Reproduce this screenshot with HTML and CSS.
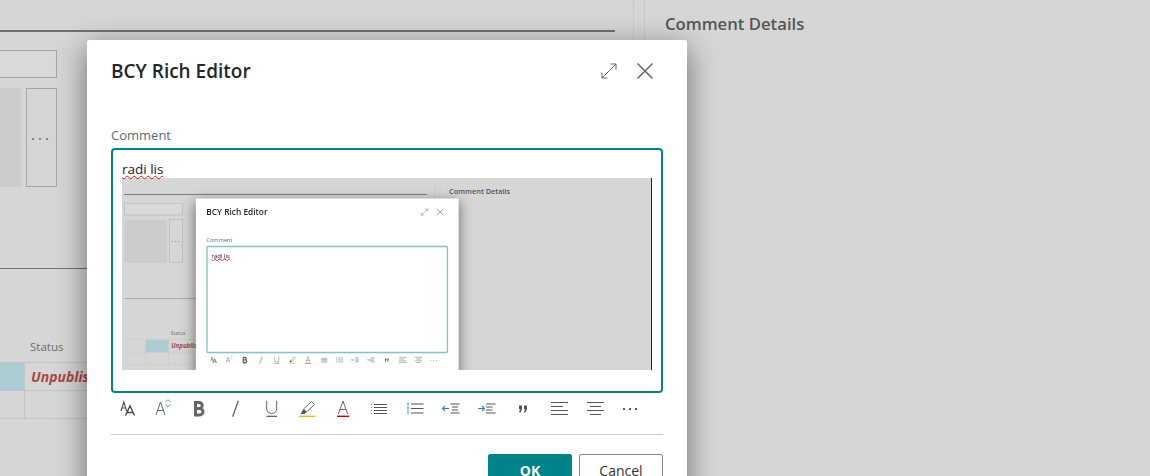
FILE: index.html
```html
<!DOCTYPE html>
<html>
<head>
  <meta charset="UTF-8">
  <title>BCY Rich Editor</title>
  <link rel="stylesheet" href="styles.css">
</head>
<body>

<svg class="icon-defs" xmlns="http://www.w3.org/2000/svg">
  <symbol id="i-expand" viewBox="0 0 24 24"><path d="M5 19 19 5M13.500 5H19v5.500M5 13.500V19h5.500" fill="none" stroke="#666" stroke-width="1"/></symbol>
  <symbol id="i-close" viewBox="0 0 24 24"><path d="M4.500 4.500l15 15M19.500 4.500l-15 15" fill="none" stroke="#666" stroke-width="1.500"/></symbol>
  <symbol id="i-fontname" viewBox="0 0 20 20"><path d="M4 12 6.800 3l2.800 9M5 9h3.600" fill="none" stroke="#555" stroke-width="1.200"/><path d="M8.500 16.500 13 6.800l4.500 9.700M10 13.500h6" fill="none" stroke="#444" stroke-width="1.400"/></symbol>
  <symbol id="i-fontsize" viewBox="0 0 20 20"><path d="M3 16 7.500 3 12 16M4.600 11.500h5.800" fill="none" stroke="#666" stroke-width="1"/><path d="M12.500 3 15 .7 17.500 3M12.500 5.500 15 7.800l2.500-2.300" fill="none" stroke="#5c9ee0" stroke-width="1"/></symbol>
  <symbol id="i-bold" viewBox="0 0 20 20"><path d="M6.500 3.500h3.700a3 3 0 0 1 0 6H6.500zM6.500 9.500h4.300a3.200 3.200 0 0 1 0 6.400H6.500z" fill="none" stroke="#666" stroke-width="3"/></symbol>
  <symbol id="i-italic" viewBox="0 0 20 20"><path d="M13.300 1.700 7.700 17.700" fill="none" stroke="#555" stroke-width="1.200"/></symbol>
  <symbol id="i-underline" viewBox="0 0 20 20"><path d="M5.700 2v8a5 4.500 0 0 0 10 0V2" fill="none" stroke="#666" stroke-width="1"/><path d="M5.500 17.300H16" stroke="#555" stroke-width="1.200"/></symbol>
  <symbol id="i-highlight" viewBox="0 0 20 20"><path d="M14.500 2.500l3 3-8 7.500-3-3z" fill="none" stroke="#666" stroke-width="1"/><path d="M6.500 10l3 3-2 2H3.500z" fill="#555"/><path d="M2 17.300h16" stroke="#f2b705" stroke-width="1.400"/></symbol>
  <symbol id="i-fontcolor" viewBox="0 0 20 20"><path d="M5.300 15 10 2l4.700 13M7 10.500h6" fill="none" stroke="#666" stroke-width="1"/><path d="M4 17.300h12" stroke="#c00000" stroke-width="1.400"/></symbol>
  <symbol id="i-bullets" viewBox="0 0 20 20"><path d="M5 5.500h13M5 8.500h13M5 11.500h13M5 14.500h13" stroke="#555" stroke-width="1"/><path d="M2.500 5v10" stroke="#3f7fd0" stroke-width="1" stroke-dasharray="1 2"/></symbol>
  <symbol id="i-numbers" viewBox="0 0 20 20"><path d="M6 5h12.500M6 9.500h12.500M6 14h12.500" stroke="#555" stroke-width="1"/><path d="M3 3.500v12.500" stroke="#5c9ee0" stroke-width="1.400" stroke-dasharray="3 1"/></symbol>
  <symbol id="i-outdent" viewBox="0 0 20 20"><path d="M9.500 5H18.500M11 8h6M11 11h6M9.500 14H18.500" stroke="#555" stroke-width="1"/><path d="M1.500 9.500H8M4 7 1.500 9.500 4 12" fill="none" stroke="#2f7fd6" stroke-width="1.100"/></symbol>
  <symbol id="i-indent" viewBox="0 0 20 20"><path d="M9 5h9.500M9 8h6.500M9 11h6.500M9 14h9.500" stroke="#555" stroke-width="1"/><path d="M1 9.500h6.500M5 7l2.500 2.500L5 12" fill="none" stroke="#2f7fd6" stroke-width="1.100"/></symbol>
  <symbol id="i-quote" viewBox="0 0 20 20"><path d="M6 6.500h3V10l-1.500 3.500H6l1-3.500H6zM11 6.500h3V10l-1.500 3.500H11l1-3.500h-1z" fill="#555"/></symbol>
  <symbol id="i-left" viewBox="0 0 20 20"><path d="M2 3.500h17M2 7.500h12M2 11.500h17M2 15.500h17" stroke="#555" stroke-width="1"/></symbol>
  <symbol id="i-center" viewBox="0 0 20 20"><path d="M2 3.500h17M5 7.500h11M2 11.500h17M5 15.500h11" stroke="#555" stroke-width="1"/></symbol>
  <symbol id="i-more" viewBox="0 0 20 20"><circle cx="3" cy="10" r="1.100" fill="#333"/><circle cx="9" cy="10" r="1.100" fill="#333"/><circle cx="15" cy="10" r="1.100" fill="#333"/></symbol>
</svg>

<div class="scene scene-main">
  <div class="main">
    <div class="rule"></div>
    <div class="field"></div>
    <div class="lookup">
      <div class="lookup-box"></div>
      <div class="lookup-btn">...</div>
    </div>
    <div class="rule-thin"></div>
    <div class="col-title">Status</div>
    <div class="table">
      <div class="cell"></div>
      <div class="cell cell-active"></div>
      <div class="cell cell-status">Unpublished</div>
      <div class="cell"></div>
      <div class="cell"></div>
      <div class="cell"></div>
    </div>
  </div>
  <div class="gutter"></div>
  <div class="details"><h2>Comment Details</h2></div>

  <div class="modal">
    <div class="modal-head">
      <h1>BCY Rich Editor</h1>
      <svg class="head-icon"><use href="#i-expand"/></svg>
      <svg class="head-icon"><use href="#i-close"/></svg>
    </div>
    <label class="label">Comment</label>
    <div class="editor">
      <p class="editor-text"><span class="misspelt">radi lis</span></p>
      <div class="shot">
        <div class="scene scene-mini">
          <div class="main">
            <div class="rule"></div>
            <div class="field"></div>
            <div class="lookup">
              <div class="lookup-box"></div>
              <div class="lookup-btn">...</div>
            </div>
            <div class="rule-thin"></div>
            <div class="col-title">Status</div>
            <div class="table">
              <div class="cell"></div>
              <div class="cell cell-active"></div>
              <div class="cell cell-status">Unpublished</div>
              <div class="cell"></div>
              <div class="cell"></div>
              <div class="cell"></div>
            </div>
          </div>
          <div class="gutter"></div>
          <div class="details"><h2>Comment Details</h2></div>

          <div class="modal">
            <div class="modal-head">
              <h1>BCY Rich Editor</h1>
              <svg class="head-icon"><use href="#i-expand"/></svg>
              <svg class="head-icon"><use href="#i-close"/></svg>
            </div>
            <label class="label">Comment</label>
            <div class="editor editor-faded">
              <p class="editor-text"><span class="misspelt">radi lis</span></p>
            </div>
            <div class="toolbar">
              <svg class="tool"><use href="#i-fontname"/></svg>
              <svg class="tool"><use href="#i-fontsize"/></svg>
              <svg class="tool"><use href="#i-bold"/></svg>
              <svg class="tool"><use href="#i-italic"/></svg>
              <svg class="tool"><use href="#i-underline"/></svg>
              <svg class="tool"><use href="#i-highlight"/></svg>
              <svg class="tool"><use href="#i-fontcolor"/></svg>
              <svg class="tool"><use href="#i-bullets"/></svg>
              <svg class="tool"><use href="#i-numbers"/></svg>
              <svg class="tool"><use href="#i-outdent"/></svg>
              <svg class="tool"><use href="#i-indent"/></svg>
              <svg class="tool"><use href="#i-quote"/></svg>
              <svg class="tool"><use href="#i-left"/></svg>
              <svg class="tool"><use href="#i-center"/></svg>
              <svg class="tool"><use href="#i-more"/></svg>
            </div>
          </div>
        </div>
      </div>
    </div>
    <div class="toolbar">
      <svg class="tool"><use href="#i-fontname"/></svg>
      <svg class="tool"><use href="#i-fontsize"/></svg>
      <svg class="tool"><use href="#i-bold"/></svg>
      <svg class="tool"><use href="#i-italic"/></svg>
      <svg class="tool"><use href="#i-underline"/></svg>
      <svg class="tool"><use href="#i-highlight"/></svg>
      <svg class="tool"><use href="#i-fontcolor"/></svg>
      <svg class="tool"><use href="#i-bullets"/></svg>
      <svg class="tool"><use href="#i-numbers"/></svg>
      <svg class="tool"><use href="#i-outdent"/></svg>
      <svg class="tool"><use href="#i-indent"/></svg>
      <svg class="tool"><use href="#i-quote"/></svg>
      <svg class="tool"><use href="#i-left"/></svg>
      <svg class="tool"><use href="#i-center"/></svg>
      <svg class="tool"><use href="#i-more"/></svg>
    </div>
    <div class="modal-foot">
      <button class="btn btn-ok">OK</button>
      <button class="btn">Cancel</button>
    </div>
  </div>
</div>

</body>
</html>
```

FILE: styles.css
```css
html,
body {
  margin: 0;
  padding: 0;
  height: 476px;
  overflow: hidden;
  background-color: #d6d6d6;
}
body {
  font-family: "Open Sans", "Noto Sans", sans-serif;
  color: #333;
}
.icon-defs {
  display: none;
}

/* page behind the dialog, wider than the window on the left */
.scene {
  position: relative;
  display: flex;
  width: 1227px;
  height: 520px;
  background-color: #d6d6d6;
}
.scene-main {
  margin-left: -77px;
}
.scene-mini {
  margin-top: 2.5px;
  margin-left: 1.5px;
  transform: scale(0.438);
  transform-origin: 0 0;
  filter: blur(0.6px);
}
.main {
  width: 710px;
  padding-top: 30px;
  border-right: 1px solid #c9c9c9;
  box-sizing: content-box;
}
.rule {
  width: 692px;
  height: 2px;
  background-color: #6b717a;
}
.field {
  width: 132px;
  height: 26px;
  margin-top: 18px;
  border: 1px solid #a3a6a8;
  box-sizing: content-box;
  background-color: #d9dad7;
}
.lookup {
  display: flex;
  gap: 5px;
  margin-top: 10px;
  height: 99px;
}
.lookup-box {
  width: 98px;
  background-color: #cbcccd;
}
.lookup-btn {
  width: 29px;
  border: 1px solid #a6a6a6;
  color: #5f5f5f;
  font-size: 15px;
  letter-spacing: 3px;
  text-align: center;
  line-height: 90px;
}
.rule-thin {
  width: 692px;
  height: 1px;
  margin-top: 81px;
  background-color: #6b7280;
}
.col-title {
  margin-top: 67px;
  margin-bottom: 4px;
  padding-left: 107px;
  font-size: 11.5px;
  line-height: 22px;
  color: #6f6f6f;
}
.table {
  display: grid;
  grid-template-columns: 50px 52px 590px;
  grid-auto-rows: 28px;
  width: 692px;
  border-top: 1px solid #c4c4c4;
}
.cell {
  border-bottom: 1px solid #c4c4c4;
  border-right: 1px solid #c4c4c4;
}
.cell-active {
  background-color: #a9cdd1;
}
.cell-status {
  padding-left: 6px;
  font-size: 14px;
  font-weight: 700;
  font-style: italic;
  line-height: 27px;
  color: #ad4644;
}
.gutter {
  width: 10px;
  border-right: 1px solid #c9c9c9;
}
.details {
  padding-left: 20px;
}
.details h2 {
  margin: 12px 0 0;
  font-size: 16.7px;
  font-weight: 600;
  line-height: 24px;
  color: #555;
}

/* dialog */
.modal {
  position: absolute;
  left: 164px;
  top: 40px;
  width: 600px;
  height: 480px;
  padding: 0 24px;
  box-sizing: border-box;
  background-color: #fff;
  border-radius: 2px;
  box-shadow: 0 8px 30px rgba(0, 0, 0, 0.5);
}
.modal-head {
  display: flex;
  align-items: center;
  gap: 12px;
  height: 24px;
  margin-right: 6px;
  padding-top: 19px;
}
.modal-head h1 {
  flex: 1;
  margin: 0;
  font-size: 19px;
  font-weight: 600;
  color: #262626;
}
.head-icon {
  width: 24px;
  height: 24px;
}
.label {
  display: block;
  margin-top: 42px;
  margin-bottom: 3px;
  font-size: 13px;
  line-height: 20px;
  color: #616b75;
}
.editor {
  height: 245px;
  padding: 10px 9px 0;
  box-sizing: border-box;
  border: 2px solid #008489;
  border-radius: 4px;
}
.editor-faded {
  border: 3px solid #7cc4c6;
}
.editor-text {
  margin: 0;
  font-size: 13.5px;
  line-height: 18px;
  color: #222;
}
.misspelt {
  text-decoration: underline wavy #e81123 1px;
}
.editor-faded .misspelt {
  text-decoration-thickness: 2px;
}
.shot {
  width: 530px;
  height: 192px;
  overflow: hidden;
  box-sizing: border-box;
  border-right: 1px solid #222;
  background-color: #d6d6d6;
}
.toolbar {
  display: flex;
  gap: 16px;
  margin-top: 6px;
  padding: 0 6px 15px;
  border-bottom: 1px solid #c8c8c8;
}
.tool {
  flex: none;
  width: 20px;
  height: 20px;
}
.modal-foot {
  display: flex;
  justify-content: flex-end;
  gap: 7px;
  margin-top: 19px;
}
.btn {
  width: 84px;
  height: 32px;
  padding: 0;
  font-family: inherit;
  font-size: 14px;
  color: #333;
  background-color: #fff;
  border: 1px solid #8a8a8a;
  border-radius: 2px;
}
.btn-ok {
  color: #fff;
  font-weight: 700;
  background-color: #008489;
  border-color: #008489;
}
```
